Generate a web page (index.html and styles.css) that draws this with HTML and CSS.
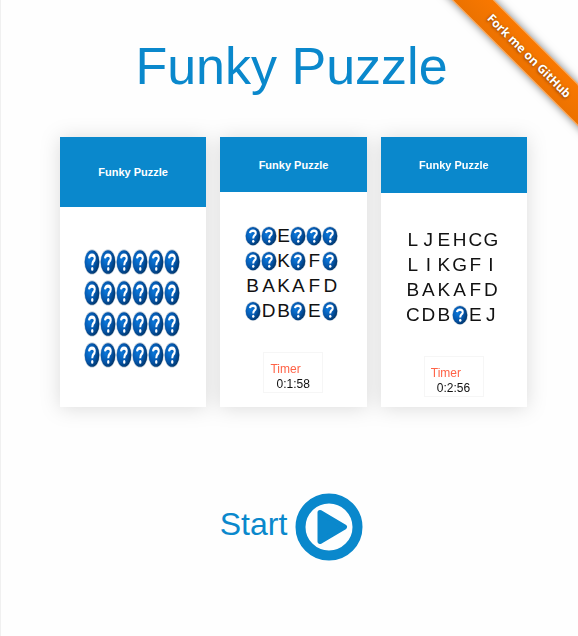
FILE: index.html
```html
<!DOCTYPE html>
<html lang="en">
<head>
<meta charset="utf-8">
<title>Funky Puzzle</title>
<link rel="stylesheet" href="styles.css">
</head>
<body>
<svg class="defs" aria-hidden="true">
  <defs>
    <radialGradient id="shade" cx=".35" cy=".4" r=".7">
      <stop offset="0" stop-color="#0a78dc"/>
      <stop offset=".55" stop-color="#0557ac"/>
      <stop offset="1" stop-color="#003264"/>
    </radialGradient>
    <symbol id="ball" viewBox="0 0 32 32" preserveAspectRatio="none">
      <circle cx="16" cy="16" r="15.800" fill="#c9d3dd"/>
      <circle cx="16" cy="16" r="14.600" fill="url(#shade)"/>
      <path d="M10 11.500Q10.500 7.500 16 7.500Q21.500 7.500 21.500 11.500Q21.500 14 18.500 15.500Q16.500 17 16.500 20" fill="none" stroke="#fff" stroke-width="4"/>
      <circle cx="16.500" cy="24.500" r="2.400" fill="#fff"/>
    </symbol>
  </defs>
</svg>
<div class="corner"><a class="ribbon" href="#github">Fork me on GitHub</a></div>
<main class="page">
  <h1 class="title">Funky Puzzle</h1>
  <section class="cards" id="cards"></section>
  <a class="start" href="#play">
    <span>Start</span>
    <svg class="play" viewBox="0 0 68 68" aria-hidden="true">
      <circle cx="34" cy="34" r="28.500" fill="none" stroke="#0a88cc" stroke-width="10"/>
      <path d="M25 19.500L49.500 34L25 48.500Z" fill="#0a88cc" stroke="#0a88cc" stroke-width="5" stroke-linejoin="round"/>
    </svg>
  </a>
</main>
<script src="cards.js"></script>
</body>
</html>
```
FILE: styles.css
```css
body {
  margin: 0;
  min-height: 100vh;
  box-sizing: border-box;
  border-left: 1px solid #f0f0f0;
  background: #fefefe;
  font-family: "Liberation Sans", Arial, sans-serif;
  position: relative;
}
.defs { position: absolute; width: 0; height: 0; }
.page {
  display: flex;
  flex-direction: column;
  align-items: center;
  padding: 36px 0 0 4px;
}
.title {
  margin: 0;
  font-size: 52px;
  line-height: 60px;
  font-weight: 400;
  color: #0a88cc;
}
.cards {
  display: grid;
  grid-template-columns: repeat(3, 1fr);
  gap: 14px;
  width: 81.5%;
  max-width: 640px;
  margin-top: 41px;
  padding-left: 4px;
  filter: drop-shadow(0 1px 10px rgba(0, 0, 0, .14));
}
.card {
  min-height: 270px;
  background: #fff;
}
.card-title {
  display: flex;
  align-items: center;
  justify-content: center;
  margin: 0;
  height: 55px;
  background: #0a88cc;
  color: #fff;
  font-size: 11px;
  font-weight: 700;
}
.covered .card-title { height: 70px; }
.solved .card-title { height: 56px; }
.board {
  display: grid;
  grid-template-columns: repeat(6, 1fr);
  grid-auto-rows: 25px;
  width: 64%;
  margin: 31px auto 0;
  padding-right: 4px;
  place-items: center;
  font-size: 19px;
  color: #111;
}
.covered .board { grid-auto-rows: 31px; margin-top: 39px; }
.solved .board { margin-top: 34px; }
.ball { display: block; width: 16px; height: 20px; }
.covered .ball { height: 26px; }
.timer {
  box-sizing: border-box;
  width: 60px;
  height: 41px;
  margin: 29px auto 0;
  padding: 9px 0 0 6px;
  border: 1px solid #f6f6f6;
  font-size: 12px;
  line-height: 15px;
}
.timer-label { color: #ff6347; }
.timer-value { padding-left: 6px; color: #111; }
.start {
  display: flex;
  align-items: center;
  gap: 8px;
  margin-top: 86px;
  font-size: 32px;
  line-height: 40px;
  color: #0a88cc;
  text-decoration: none;
}
.start span { margin-bottom: 6px; }
.play { display: block; width: 68px; height: 68px; }
.corner {
  position: absolute;
  top: 0;
  right: 0;
  width: 150px;
  height: 150px;
  overflow: hidden;
}
.ribbon {
  position: absolute;
  top: 41px;
  right: -61px;
  width: 220px;
  height: 30px;
  box-sizing: border-box;
  transform: rotate(45deg);
  background: linear-gradient(#f97800, #ec7200);
  box-shadow: 0 0 8px rgba(0, 0, 0, .5);
  color: #fff;
  font: 700 12px/28px "Noto Sans", sans-serif;
  text-align: center;
  text-decoration: none;
  text-shadow: 0 1px 3px rgba(0, 0, 0, .5);
  border: 1px solid #f08c30;
}
```
FILE: cards.js
```js
const cards = [
  { kind: 'covered', rows: ['??????', '??????', '??????', '??????'] },
  { kind: 'playing', rows: ['??E???', '??K?F?', 'BAKAFD', '?DB?E?'], time: '0:1:58' },
  { kind: 'solved', rows: ['LJEHCG', 'LIKGFI', 'BAKAFD', 'CDB?EJ'], time: '0:2:56' }
];
const ball = '<svg class="ball" role="img" aria-label="Hidden"><use href="#ball"/></svg>';
document.getElementById('cards').innerHTML = cards.map(card => `
  <article class="card ${card.kind}">
    <h2 class="card-title">Funky Puzzle</h2>
    <div class="board">${[...card.rows.join('')].map(c => c === '?' ? ball : `<span>${c}</span>`).join('')}</div>
    ${card.time ? `<div class="timer"><div class="timer-label">Timer</div><div class="timer-value">${card.time}</div></div>` : ''}
  </article>`).join('');
```
